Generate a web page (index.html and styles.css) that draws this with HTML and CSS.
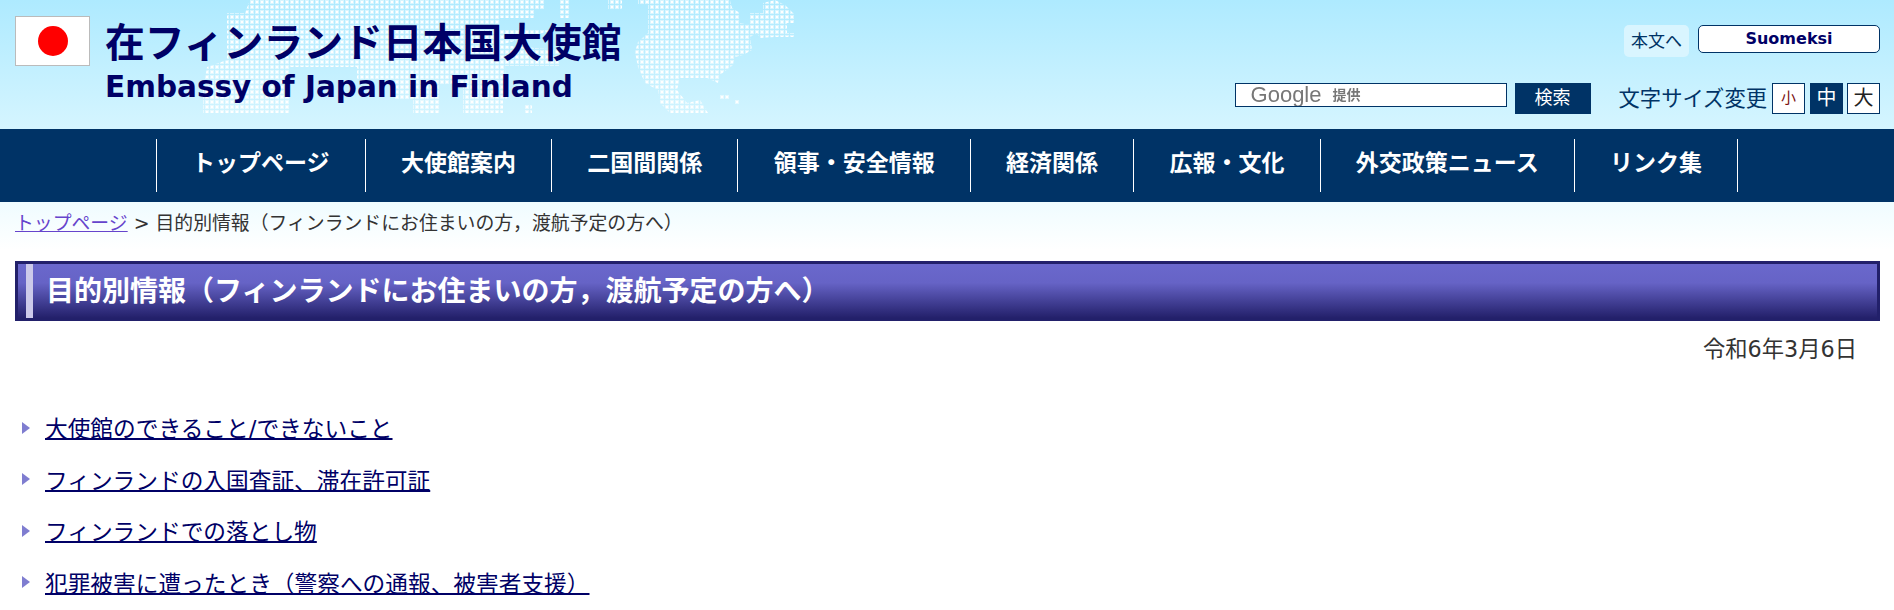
FILE: index.html
```html
<!DOCTYPE html>
<html lang="ja">
<head>
<meta charset="utf-8">
<title>目的別情報</title>
<link rel="stylesheet" href="styles.css">
</head>
<body>
<header class="site-header">
  <svg class="map" width="1000" height="129" viewBox="0 0 1000 129" aria-hidden="true">
    <defs>
      <pattern id="dots" width="5" height="5" patternUnits="userSpaceOnUse">
        <rect width="4" height="4" fill="#fff" fill-opacity="0.5"/>
        <rect x="1" y="1" width="2" height="2" fill="#fff"/>
      </pattern>
    </defs>
    <path fill="url(#dots)" d="M262 0H545V10H535V18H500V30L560 30V0H570V18H560V28L500 45 560 50 560 66H505L507 100H503V113H463V85H440V113H413V100H395V80H357V67H290V113H203V90L207 67 227 60V13L245 13 250 0Z"/>
    <path fill="url(#dots)" d="M608 0H622V9H608ZM638 0H650V4H638Z"/>
    <path fill="url(#dots)" d="M648 0H730L732 8 740 13V23L750 25V13H763V3L775 0 785 5 795 15V23H787V33H795V37H775L760 38 757 33 750 37 752 50 743 55 735 57 733 65 720 75 718 83 707 78H680L677 90 687 103 700 100 708 113H670L660 103 658 90 645 83 638 67 635 52 638 42 648 33Z"/>
    <path fill="url(#dots)" d="M525 105H532V113H525ZM720 95H730V100H720ZM735 100H740V105H735Z"/>
  </svg>
  <div class="brand">
    <div class="flag"><span class="sun"></span></div>
    <div class="titles">
      <div class="title-ja">在フィンランド日本国大使館</div>
      <div class="title-en">Embassy of Japan in Finland</div>
    </div>
  </div>
  <div class="tools">
    <div class="tools-top">
      <a class="skip" href="#main">本文へ</a>
      <a class="lang" href="#">Suomeksi</a>
    </div>
    <div class="tools-bottom">
      <div class="search-box"><span class="google">Google</span><span class="teikyo">提供</span></div>
      <button class="search-btn" type="button">検索</button>
      <span class="size-label">文字サイズ変更</span>
      <span class="size-btn size-s">小</span>
      <span class="size-btn size-on">中</span>
      <span class="size-btn">大</span>
    </div>
  </div>
</header>
<nav class="nav">
  <ul class="nav-list">
    <li><a href="#">トップページ</a></li>
    <li><a href="#">大使館案内</a></li>
    <li><a href="#">二国間関係</a></li>
    <li><a href="#">領事・安全情報</a></li>
    <li><a href="#">経済関係</a></li>
    <li><a href="#">広報・文化</a></li>
    <li><a href="#">外交政策ニュース</a></li>
    <li><a href="#">リンク集</a></li>
  </ul>
</nav>
<main class="content" id="main">
  <p class="crumbs"><a href="#">トップページ</a> &gt; 目的別情報（フィンランドにお住まいの方，渡航予定の方へ）</p>
  <h1 class="page-title"><span>目的別情報（フィンランドにお住まいの方，渡航予定の方へ）</span></h1>
  <p class="date">令和6年3月6日</p>
  <ul class="links">
    <li><a href="#">大使館のできること/できないこと</a></li>
    <li><a href="#">フィンランドの入国査証、滞在許可証</a></li>
    <li><a href="#">フィンランドでの落とし物</a></li>
    <li><a href="#">犯罪被害に遭ったとき（警察への通報、被害者支援）</a></li>
  </ul>
</main>
</body>
</html>
```
FILE: styles.css
```css
* { box-sizing: border-box; }
html, body { margin: 0; padding: 0; }
body {
  font-family: "DejaVu Sans", "Noto Sans CJK JP", sans-serif;
  color: #333;
  background: #fff;
  height: 610px;
  overflow: hidden;
}
a { color: inherit; }

.site-header {
  position: relative;
  height: 129px;
  display: flex;
  justify-content: space-between;
  background: linear-gradient(#aeeaff, #d5f5ff);
  padding: 16px 14px 0 15px;
}
.map { position: absolute; left: 0; top: 0; }
.brand { position: relative; display: flex; gap: 15px; }
.flag {
  width: 75px;
  height: 50px;
  background: #fff;
  border: 1px solid #bbb;
  display: flex;
  align-items: center;
  justify-content: center;
}
.sun { width: 30px; height: 30px; border-radius: 50%; background: #f00; }
.titles { color: #000066; font-weight: bold; }
.title-ja { font-size: 39.8px; line-height: 54px; }
.title-en { font-size: 29.5px; line-height: 36px; margin-top: -1px; }

.tools { position: relative; display: flex; flex-direction: column; align-items: flex-end; }
.tools-top { display: flex; align-items: flex-start; gap: 9px; margin-top: 9px; }
.skip {
  width: 65px;
  height: 32px;
  border-radius: 5px;
  background: #d9f5ff;
  font-size: 17px;
  line-height: 32px;
  text-align: center;
  text-decoration: none;
  color: #003366;
}
.lang {
  width: 182px;
  height: 28px;
  border: 1px solid #003366;
  border-radius: 5px;
  background: #fff;
  color: #000066;
  font-size: 16px;
  font-weight: bold;
  line-height: 25px;
  text-align: center;
  text-decoration: none;
}
.tools-bottom { display: flex; align-items: flex-start; margin-top: 26px; }
.search-box {
  width: 272px;
  height: 24px;
  border: 1px solid #003366;
  background: #fff;
  padding-left: 15px;
  display: flex;
  align-items: center;
  gap: 11px;
  color: #777;
  overflow: hidden;
}
.google { font-family: "Liberation Sans", sans-serif; font-size: 22px; line-height: 22px; filter: blur(0.4px); }
.teikyo { font-size: 14px; font-weight: bold; line-height: 22px; filter: blur(0.4px); }
.search-btn {
  width: 76px;
  height: 31px;
  margin: 0 28px 0 8px;
  padding: 0 0 5px;
  border: 0;
  background: #003366;
  color: #fff;
  font: 18px "Noto Sans CJK JP", sans-serif;
}
.size-label { font-size: 21.3px; line-height: 31px; color: #003366; margin-right: 5px; white-space: nowrap; }
.size-btn {
  width: 33px;
  height: 31px;
  margin-left: 4px;
  border: 1px solid #003366;
  background: #fff;
  color: #222;
  font-size: 20px;
  line-height: 28px;
  text-align: center;
}
.size-label + .size-btn { margin-left: 0; }
.size-s { font-size: 15px; color: #7a1010; }
.size-on { background: #003366; color: #fff; margin-left: 5px; }

.nav { height: 73px; background: #003366; display: flex; align-items: center; justify-content: center; }
.nav-list { list-style: none; margin: 0; padding: 0; display: flex; border-right: 1px solid #fff; }
.nav-list li { border-left: 1px solid #fff; height: 53px; display: flex; align-items: center; padding: 0 35.2px 9px; }
.nav-list a { color: #fff; font-size: 23px; font-weight: bold; text-decoration: none; white-space: nowrap; }

.content {
  padding: 0 14px 0 15px;
  background: linear-gradient(#effcff, #fff 48px);
}
.crumbs { margin: 0; padding-top: 8px; height: 59px; font-size: 18.85px; line-height: 28px; white-space: nowrap; }
.crumbs a { color: #6644cc; }
.page-title {
  margin: 0;
  height: 60px;
  border: 3px solid #22206a;
  padding-left: 8px;
  background: linear-gradient(#6a68cc 0, #6663c6 35%, #23206a 100%);
  color: #fff;
  font-size: 28px;
  line-height: 55px;
}
.page-title span { display: block; border-left: 7px solid #ccc9ea; padding-left: 13px; height: 54px; white-space: nowrap; }
.date { margin: 0; padding: 11px 23px 0 0; text-align: right; font-size: 22.3px; line-height: 34px; height: 81px; }
.links { list-style: none; margin: 0; padding: 0 0 0 7px; }
.links li { display: flex; align-items: center; gap: 15px; height: 51.5px; font-size: 22.7px; }
.links li::before {
  content: "";
  width: 0;
  height: 0;
  border-left: 8px solid #7f7dd0;
  border-top: 6px solid transparent;
  border-bottom: 6px solid transparent;
}
.links a { color: #000066; white-space: nowrap; text-decoration-thickness: 2px; }
```
